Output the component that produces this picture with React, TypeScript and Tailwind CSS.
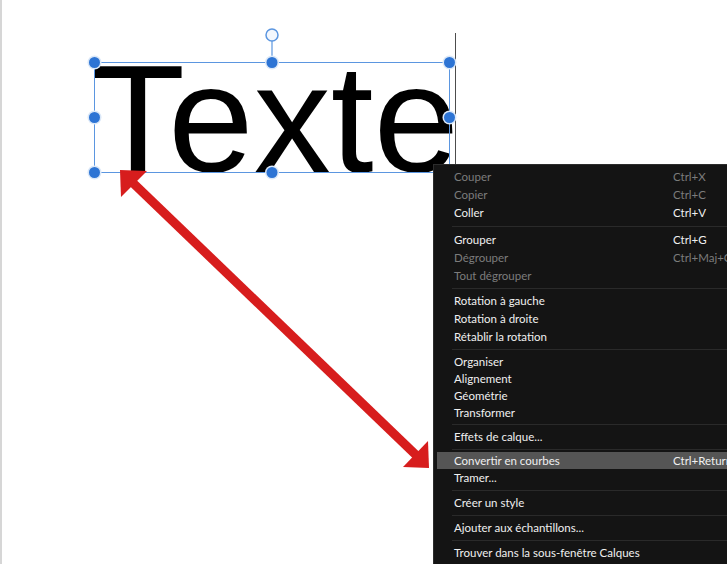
// Éditeur : texte sélectionné + menu contextuel « Convertir en courbes »

type Item =
  | { kind: 'item'; label: string; shortcut?: string; disabled?: boolean; active?: boolean; h: 'h18' | 'h17' }
  | { kind: 'sep'; h: 's9' | 's7' | 's6' }

const heights: Record<string, string> = {
  h18: 'h-[18px]',
  h17: 'h-[17px]',
  s9: 'h-[9px]',
  s7: 'h-[7px]',
  s6: 'h-[6px]',
}

const items: Item[] = [
  { kind: 'item', label: 'Couper', shortcut: 'Ctrl+X', disabled: true, h: 'h18' },
  { kind: 'item', label: 'Copier', shortcut: 'Ctrl+C', disabled: true, h: 'h18' },
  { kind: 'item', label: 'Coller', shortcut: 'Ctrl+V', h: 'h18' },
  { kind: 'sep', h: 's9' },
  { kind: 'item', label: 'Grouper', shortcut: 'Ctrl+G', h: 'h18' },
  { kind: 'item', label: 'Dégrouper', shortcut: 'Ctrl+Maj+G', disabled: true, h: 'h18' },
  { kind: 'item', label: 'Tout dégrouper', disabled: true, h: 'h18' },
  { kind: 'sep', h: 's7' },
  { kind: 'item', label: 'Rotation à gauche', h: 'h18' },
  { kind: 'item', label: 'Rotation à droite', h: 'h18' },
  { kind: 'item', label: 'Rétablir la rotation', h: 'h18' },
  { kind: 'sep', h: 's7' },
  { kind: 'item', label: 'Organiser', h: 'h17' },
  { kind: 'item', label: 'Alignement', h: 'h17' },
  { kind: 'item', label: 'Géométrie', h: 'h17' },
  { kind: 'item', label: 'Transformer', h: 'h17' },
  { kind: 'sep', h: 's7' },
  { kind: 'item', label: 'Effets de calque...', h: 'h18' },
  { kind: 'sep', h: 's6' },
  { kind: 'item', label: 'Convertir en courbes', shortcut: 'Ctrl+Return', active: true, h: 'h17' },
  { kind: 'item', label: 'Tramer...', h: 'h18' },
  { kind: 'sep', h: 's7' },
  { kind: 'item', label: 'Créer un style', h: 'h18' },
  { kind: 'sep', h: 's7' },
  { kind: 'item', label: 'Ajouter aux échantillons...', h: 'h18' },
  { kind: 'sep', h: 's7' },
  { kind: 'item', label: 'Trouver dans la sous-fenêtre Calques', h: 'h18' },
  { kind: 'sep', h: 's7' },
]

// poignée de sélection (cercle bleu plein)
function Handle({ x, y }: { x: number; y: number }) {
  return (
    <g>
      <circle cx={x} cy={y} r={7} fill="#dbe8f8" />
      <circle cx={x} cy={y} r={5.5} fill="#2d74d4" />
    </g>
  )
}

function ContextMenu() {
  return (
    <div className="absolute left-[431px] top-[164px] w-[320px] h-[420px] bg-[#141414] border-l border-t border-[#2c2c2c] pt-[3px] text-[11.5px] leading-[14px] font-['Lato',sans-serif]">
      {items.map((it, i) =>
        it.kind === 'sep' ? (
          <div key={i} className={`${heights[it.h]} flex items-center pl-[18px]`}>
            <div className="h-px w-full bg-[#2a2a2a]" />
          </div>
        ) : (
          <div
            key={i}
            className={`${heights[it.h]} flex items-center ml-[3px] pl-[17px] ${
              it.active ? 'bg-[#555555]' : ''
            } ${it.disabled ? 'text-[#7c7c7c]' : 'text-[#f0f0f0]'}`}
          >
            <span className="w-[219px] whitespace-nowrap">{it.label}</span>
            <span className="whitespace-nowrap">{it.shortcut}</span>
          </div>
        ),
      )}
    </div>
  )
}

export default function App() {
  return (
    <div className="relative w-[727px] h-[564px] overflow-hidden bg-white border-l-2 border-[#d6d6d6]">
      {/* repère vertical à droite du bloc */}
      <div className="absolute left-[453px] top-[33px] w-px h-[132px] bg-[#4d4d4d]" />

      {/* texte sur le canevas */}
      <div className="absolute left-[89px] top-[42px] text-[154px] leading-none text-black font-['Liberation_Sans',Arial,sans-serif] whitespace-nowrap">
        Texte
      </div>

      {/* cadre de sélection, poignées et flèche rouge */}
      <svg className="absolute -left-[2px] top-0" width={727} height={564}>
        <rect x={94.5} y={62.5} width={355} height={110} fill="none" stroke="#5b96e0" strokeWidth={1} />
        <line x1={272} y1={41} x2={272} y2={62} stroke="#5b96e0" strokeWidth={1.2} />
        <circle cx={272} cy={35} r={6} fill="#f3f7fd" stroke="#5b96e0" strokeWidth={1.5} />
        <Handle x={94.5} y={62.5} />
        <Handle x={272} y={62.5} />
        <Handle x={449.5} y={62.5} />
        <Handle x={94.5} y={117.5} />
        <Handle x={449.5} y={117.5} />
        <Handle x={94.5} y={172.5} />
        <Handle x={272} y={172.5} />

        <line x1={132} y1={182} x2={417} y2={456} stroke="#d71d1d" strokeWidth={9} />
        <polygon points="120,170 147,171 121,197" fill="#d71d1d" />
        <polygon points="429,468 403,467 428,441" fill="#d71d1d" />
      </svg>

      <ContextMenu />
    </div>
  )
}
